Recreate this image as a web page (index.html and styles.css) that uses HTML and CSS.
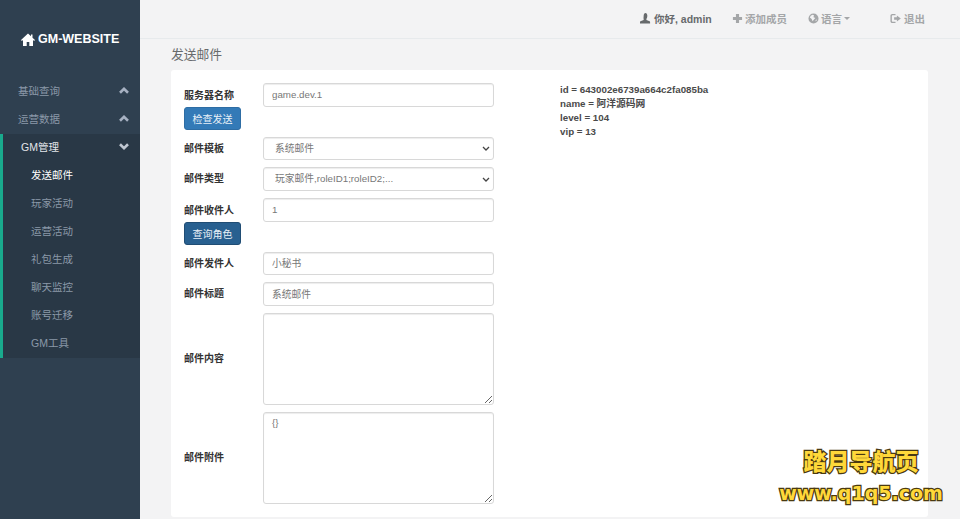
FILE: index.html
```html
<!DOCTYPE html>
<html lang="zh">
<head>
<meta charset="utf-8">
<title>GM-WEBSITE</title>
<link rel="stylesheet" href="styles.css">
</head>
<body>
<div class="app">
  <aside class="sidebar">
    <div class="logo">
      <svg class="logo-icon" viewBox="0 0 14 13"><path d="M7 .5 0 7l.9 1L2 7v6h3.700V9h2.600v4H12V7l1.100 1 .9-1-2.500-2.300V1.500H10v1.800z"/></svg>
      <span>GM-WEBSITE</span>
    </div>
    <nav class="nav">
      <a class="nav-item">基础查询<svg class="chev" viewBox="0 0 10 7"><path d="M1 5.700 5 1.800l4 3.900"/></svg></a>
      <a class="nav-item tall">运营数据<svg class="chev" viewBox="0 0 10 7"><path d="M1 5.700 5 1.800l4 3.900"/></svg></a>
      <div class="nav-group">
        <a class="nav-item open">GM管理<svg class="chev" viewBox="0 0 10 7"><path d="M1 1.300 5 5.200l4-3.900"/></svg></a>
        <a class="sub active">发送邮件</a>
        <a class="sub">玩家活动</a>
        <a class="sub">运营活动</a>
        <a class="sub">礼包生成</a>
        <a class="sub">聊天监控</a>
        <a class="sub">账号迁移</a>
        <a class="sub">GM工具</a>
      </div>
    </nav>
  </aside>
  <div class="main">
    <header class="topbar">
      <span class="top-item user"><svg class="ti" viewBox="0 0 12 12"><path d="M4 3c0-1.700.9-3 2-3s2 1.300 2 3-.6 3-1 3.400V7.500l3.500 1.500c.4.200.5.500.5 1V11.500H0V10c0-.5.100-.8.500-1L4 7.500V6.400C3.600 6 4 4.700 4 3z"/></svg>你好, admin</span>
      <span class="top-item add"><svg class="ti" viewBox="0 0 12 12"><path d="M4.300 1h3.400v3.300H11v3.400H7.700V11H4.300V7.700H1V4.300h3.300z"/></svg>添加成员</span>
      <span class="top-item lang"><svg class="ti" viewBox="0 0 12 12"><path fill-rule="evenodd" d="M6 .5a5.500 5.500 0 1 1 0 11 5.500 5.500 0 0 1 0-11zM3 3 2 5l2 1.500L5 9l1.500-2L8 5.500 6 4.500 6.500 2.500 5 2zM9 6.500 8 9l1.500-.5z"/></svg>语言<i class="caret"></i></span>
      <span class="top-item out"><svg class="ti" viewBox="0 0 12 12"><path d="M.5 3C.5 1.900 1.400 1 2.500 1H6v1.500H2.800c-.500 0-.8.300-.8.800v5.400c0 .5.300.8.800.8H6V11H2.500C1.400 11 .5 10.100.5 9z"/><path d="M7.500 2.800 11.800 6 7.500 9.200V7.300H4.500V4.700h3z"/></svg>退出</span>
    </header>
    <h1 class="page-title">发送邮件</h1>
    <section class="card">
      <form class="form">
        <div class="row"><label class="lbl lbl-top">服务器名称</label><input class="ctl" value="game.dev.1"></div>
        <button type="button" class="btn">检查发送</button>
        <div class="row"><label class="lbl">邮件模板</label><select class="ctl sel"><option>系统邮件</option></select></div>
        <div class="row"><label class="lbl">邮件类型</label><select class="ctl sel"><option>玩家邮件,roleID1;roleID2;...</option></select></div>
        <div class="row"><label class="lbl lbl-top">邮件收件人</label><input class="ctl" value="1"></div>
        <button type="button" class="btn btn-dark">查询角色</button>
        <div class="row"><label class="lbl">邮件发件人</label><input class="ctl" value="小秘书"></div>
        <div class="row"><label class="lbl">邮件标题</label><input class="ctl" value="系统邮件"></div>
        <div class="row"><label class="lbl">邮件内容</label><textarea class="ctl area"></textarea></div>
        <div class="row"><label class="lbl">邮件附件</label><textarea class="ctl area">{}</textarea></div>
      </form>
      <div class="info">
        <div>id = 643002e6739a664c2fa085ba</div>
        <div>name = 阿洋源码网</div>
        <div>level = 104</div>
        <div>vip = 13</div>
      </div>
    </section>
  </div>
  <div class="watermark">
    <div class="wm-cn">踏月导航页</div>
    <div class="wm-en">www.q1q5.com</div>
  </div>
</div>
</body>
</html>
```
FILE: styles.css
```css
* { box-sizing: border-box; }
html, body { margin: 0; height: 100%; }
body {
  font-family: "Liberation Sans", "Noto Sans CJK SC", sans-serif;
  font-size: 10.5px;
  color: #676a6c;
  background: #f3f3f4;
  overflow: hidden;
}
.app { display: flex; height: 519px; position: relative; overflow: hidden; }

.sidebar { width: 140px; flex: none; background: #2f4050; color: #a7b1c2; }
.logo {
  height: 76px;
  padding: 2px 0 0 21px;
  display: flex;
  align-items: center;
  gap: 3px;
  color: #fff;
  font-size: 12.5px;
  font-weight: bold;
}
.logo-icon { width: 14px; height: 13px; fill: #fff; }
.nav-item {
  display: flex;
  align-items: center;
  justify-content: space-between;
  height: 28px;
  padding: 0 11px 0 18px;
  color: #8b98a8;
  font-size: 10.5px;
}
.nav-item.tall { height: 30px; padding-bottom: 1px; }
.chev { width: 10px; height: 7px; fill: none; stroke: #a7b1c2; stroke-width: 2.600; }
.nav-group { background: #293846; border-left: 3px solid #19aa8d; height: 224px; }
.nav-item.open { color: #e3e6ea; height: 27px; padding-bottom: 2px; }
.nav-item.open .chev { stroke: #c0c7d2; }
.sub { display: flex; align-items: center; height: 27.900px; padding-left: 28px; color: #8b98a8; }
.sub.active { color: #fff; }

.main { flex: 1; min-width: 0; padding-right: 32px; }
.topbar {
  height: 39px;
  margin-right: -32px;
  padding: 0 0 2px 500px;
  border-bottom: 1px solid #e7eaec;
  display: flex;
  align-items: center;
}
.top-item { display: flex; align-items: center; color: #a4a6a8; font-weight: bold; }
.ti { width: 11px; height: 11px; fill: currentColor; margin-right: 2px; }
.user { color: #676a6c; width: 92px; }
.user .ti, .out .ti { margin-right: 3px; }
.add { width: 76px; }
.lang { width: 82px; }
.caret {
  margin-left: 2px;
  width: 0;
  height: 0;
  border: 3px solid transparent;
  border-top-color: currentColor;
  border-bottom: 0;
}
.page-title {
  margin: 0;
  padding-left: 31px;
  height: 31px;
  line-height: 32px;
  font-size: 12.750px;
  font-weight: normal;
  color: #676a6c;
}
.card {
  margin-left: 31px;
  height: 447px;
  background: #fff;
  border-radius: 3px;
  padding: 13px 13px 0;
  display: flex;
  color: #333;
}
.form { width: 310px; flex: none; display: flex; flex-direction: column; }
.row { display: flex; align-items: center; margin-bottom: 7px; }
.lbl { width: 79px; flex: none; font-weight: bold; font-size: 10px; color: #333; padding-bottom: 3px; }
.lbl-top { align-self: flex-start; padding: 4px 0 0; }
.row:has(+ .btn) { margin-bottom: 0; }
.ctl {
  width: 231px;
  height: 23.700px;
  border: 1px solid #d8d8d8;
  border-radius: 3px;
  padding: 0 8px 1px;
  font: inherit;
  font-size: 9.750px;
  color: #777;
  background: #fff;
  box-shadow: inset 0 1px 1px rgba(0,0,0,.075);
}
.sel {
  appearance: none;
  padding-left: 11px;
  background: #fff url("data:image/svg+xml,%3Csvg xmlns='http://www.w3.org/2000/svg' width='8' height='5'%3E%3Cpath d='M1 1l3 3 3-3' fill='none' stroke='%23444' stroke-width='1.300'/%3E%3C/svg%3E") no-repeat right 3px center;
}
.area { height: 92px; padding-top: 4px; }
.btn {
  width: 57px;
  height: 23px;
  border: 1px solid #2e6da4;
  border-radius: 3px;
  background: #337ab7;
  color: #e8f0f7;
  font: inherit;
  font-size: 10px;
  padding: 0;
  margin-bottom: 7px;
}
.btn-dark { background: #286090; border-color: #204d74; }
.info { margin-left: 66px; line-height: 14px; font-size: 9.750px; color: #4a4a4a; font-weight: bold; }

.watermark {
  position: absolute;
  left: 778px;
  top: 445px;
  width: 166px;
  text-align: center;
  color: #ffd83a;
  font-family: "DejaVu Sans", "Noto Sans CJK SC", sans-serif;
  font-weight: bold;
  paint-order: stroke fill;
  -webkit-text-stroke: 2.500px #4a3a10;
}
.wm-cn { font-family: "Noto Sans CJK SC", sans-serif; font-weight: 900; font-size: 23px; line-height: 30px; }
.wm-en { font-size: 19px; line-height: 24px; margin-top: 6px; white-space: nowrap; }
```
